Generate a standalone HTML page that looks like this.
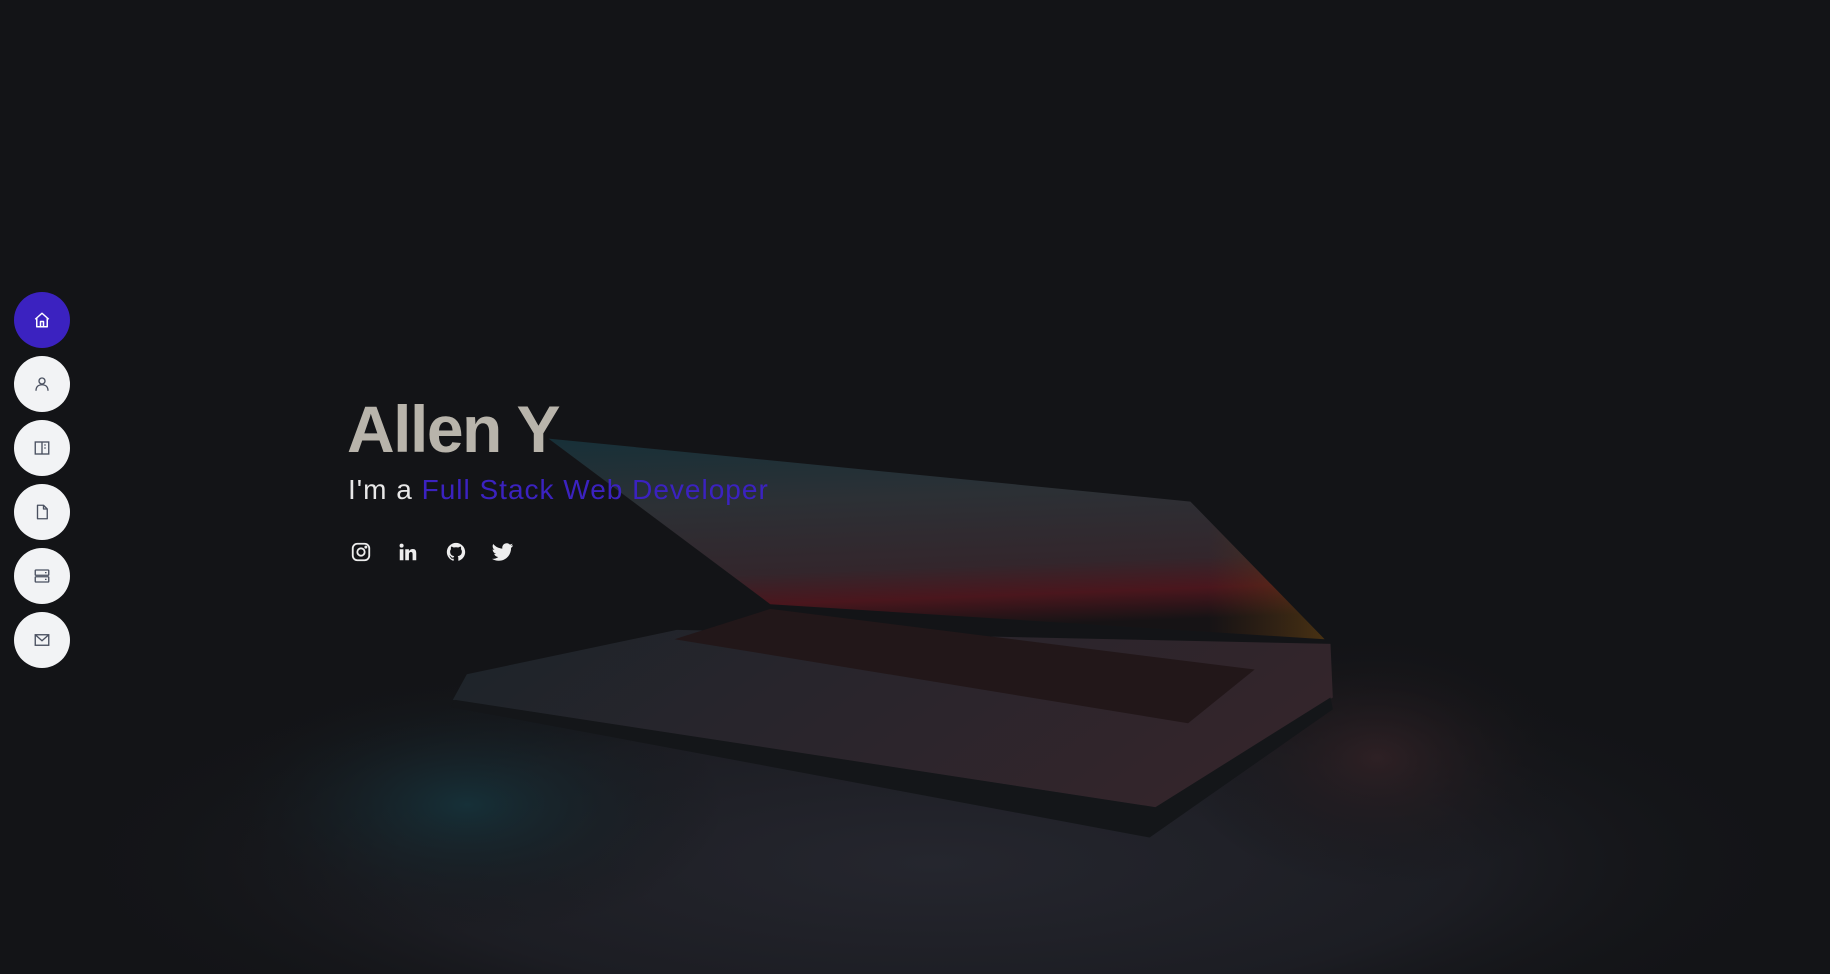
<!DOCTYPE html>
<html><head><meta charset="utf-8"><style>
html,body{margin:0;padding:0;width:1830px;height:974px;overflow:hidden;background:#131417;font-family:"Liberation Sans",sans-serif;position:relative}
.bg{position:absolute;left:0;top:0;width:1830px;height:974px;display:block}
.nav{position:absolute;left:14px;width:56px;height:56px;border-radius:50%;background:#f2f3f5;display:flex;align-items:center;justify-content:center}
.nav.act{background:#3b22c0}
h1{position:absolute;left:347px;top:396px;margin:0;font-size:66px;font-weight:bold;color:#b8b4ab;letter-spacing:-1.5px;line-height:1}
.sub{position:absolute;left:348px;top:474px;font-size:28px;color:#e8e8e8;letter-spacing:1px;white-space:nowrap}
.sub span{color:#3b22c0}
.soc{position:absolute;top:541px;width:22px;height:22px}
</style></head><body>
<svg class="bg" viewBox="0 0 1568 835" preserveAspectRatio="none">
<defs>
<radialGradient id="floor" cx="0.5" cy="0.5" r="0.5"><stop offset="0" stop-color="#25262e"/><stop offset="0.6" stop-color="#1c1d23"/><stop offset="1" stop-color="#131417" stop-opacity="0"/></radialGradient>
<radialGradient id="teal" cx="0.5" cy="0.5" r="0.5"><stop offset="0" stop-color="#163038"/><stop offset="1" stop-color="#131417" stop-opacity="0"/></radialGradient>
<radialGradient id="red" cx="0.5" cy="0.5" r="0.5"><stop offset="0" stop-color="#2e2024"/><stop offset="1" stop-color="#131417" stop-opacity="0"/></radialGradient>
<linearGradient id="scr" x1="0" y1="0" x2="0.15" y2="1"><stop offset="0" stop-color="#173038"/><stop offset="0.35" stop-color="#2c3035"/><stop offset="0.7" stop-color="#33262c"/><stop offset="0.85" stop-color="#4a161d"/><stop offset="1" stop-color="#161315"/></linearGradient>
<linearGradient id="scr2" x1="0" y1="0" x2="1" y2="0"><stop offset="0" stop-color="#000" stop-opacity="0"/><stop offset="0.85" stop-color="#6a3a10" stop-opacity="0"/><stop offset="1" stop-color="#7a5010" stop-opacity="0.5"/></linearGradient>
<linearGradient id="base" x1="0" y1="0" x2="1" y2="0.3"><stop offset="0" stop-color="#1c2429"/><stop offset="0.4" stop-color="#27252c"/><stop offset="1" stop-color="#33252b"/></linearGradient>
</defs>
<ellipse cx="800" cy="740" rx="760" ry="200" fill="url(#floor)"/>
<ellipse cx="400" cy="690" rx="220" ry="110" fill="url(#teal)"/>
<ellipse cx="1180" cy="650" rx="170" ry="110" fill="url(#red)"/>
<polygon points="470,376 1020,430 1135,548 660,518" fill="url(#scr)"/>
<polygon points="470,376 1020,430 1135,548 660,518" fill="url(#scr2)"/>
<polygon points="400,578 580,540 1140,552 1142,598 990,692 388,600" fill="url(#base)"/>
<polygon points="390,600 990,692 1140,598 1142,608 985,718 386,606" fill="#141619"/>
<polygon points="578,548 660,522 1075,574 1018,620" fill="#221719"/>
</svg>

<div class="nav act" style="top:292px"><svg width="18" height="18" viewBox="0 0 24 24" fill="none" stroke="#fff" stroke-width="2" stroke-linejoin="round"><path d="M3 11 L12 3 L21 11 M5 9 V21 H19 V9 M10 21 V14 H14 V21"/></svg></div>
<div class="nav" style="top:356px"><svg width="18" height="18" viewBox="0 0 24 24" fill="none" stroke="#4a5060" stroke-width="1.8"><circle cx="12" cy="8" r="4"/><path d="M4 21 C4 15 8 13 12 13 C16 13 20 15 20 21"/></svg></div>
<div class="nav" style="top:420px"><svg width="18" height="18" viewBox="0 0 24 24" fill="none" stroke="#4a5060" stroke-width="1.8"><rect x="3" y="4" width="18" height="16"/><path d="M12 4 V20 M15 8 H17 M15 12 H17"/></svg></div>
<div class="nav" style="top:484px"><svg width="18" height="18" viewBox="0 0 24 24" fill="none" stroke="#4a5060" stroke-width="1.8" stroke-linejoin="round"><path d="M6 3 H14 L19 8 V21 H6 Z M14 3 V8 H19"/></svg></div>
<div class="nav" style="top:548px"><svg width="18" height="18" viewBox="0 0 24 24" fill="none" stroke="#4a5060" stroke-width="1.8"><rect x="3" y="4" width="18" height="7" rx="1"/><rect x="3" y="13" width="18" height="7" rx="1"/><path d="M16 7.5 H18 M16 16.5 H18"/></svg></div>
<div class="nav" style="top:612px"><svg width="18" height="18" viewBox="0 0 24 24" fill="none" stroke="#4a5060" stroke-width="1.8"><rect x="3" y="5" width="18" height="14"/><path d="M3 5 L12 13 L21 5"/></svg></div>

<h1>Allen Y</h1>
<div class="sub">I'm a <span>Full Stack Web Developer</span></div>

<svg class="soc" style="left:350px" viewBox="0 0 24 24" fill="none" stroke="#eee" stroke-width="2"><rect x="3" y="3" width="18" height="18" rx="5"/><circle cx="12" cy="12" r="4"/><circle cx="17.3" cy="6.7" r="0.6" fill="#eee"/></svg>
<svg class="soc" style="left:397px" viewBox="0 0 24 24" fill="#eee"><rect x="3" y="9" width="4" height="12"/><circle cx="5" cy="5" r="2.2"/><path d="M9 9 H13 V11 C14 9.5 15.5 8.7 17.3 8.7 C20 8.7 21 10.5 21 13.5 V21 H17 V14.3 C17 12.8 16.5 12 15.2 12 C13.8 12 13 13 13 14.5 V21 H9 Z"/></svg>
<svg class="soc" style="left:445px" viewBox="0 0 24 24" fill="#eee"><path d="M12 2 C6.5 2 2 6.5 2 12 C2 16.4 4.9 20.2 8.8 21.5 C9.3 21.6 9.5 21.3 9.5 21 V19.3 C6.7 19.9 6.1 18 6.1 18 C5.6 16.8 5 16.5 5 16.5 C4.1 15.9 5.1 15.900 5.1 15.9 C6.1 16 6.6 17 6.6 17 C7.5 18.5 9 18.1 9.5 17.8 C9.6 17.2 9.9 16.7 10.2 16.5 C8 16.2 5.6 15.4 5.6 11.5 C5.6 10.4 6 9.5 6.6 8.8 C6.5 8.5 6.2 7.5 6.700 6.1 C6.7 6.1 7.5 5.8 9.5 7.1 C10.3 6.9 11.1 6.8 12 6.8 C12.9 6.8 13.7 6.9 14.5 7.1 C16.5 5.8 17.3 6.1 17.3 6.1 C17.8 7.5 17.5 8.5 17.4 8.8 C18 9.5 18.4 10.4 18.4 11.5 C18.4 15.4 16 16.2 13.8 16.5 C14.2 16.8 14.5 17.4 14.5 18.3 V21 C14.5 21.3 14.7 21.6 15.2 21.5 C19.1 20.2 22 16.4 22 12 C22 6.5 17.5 2 12 2 Z"/></svg>
<svg class="soc" style="left:492px" viewBox="0 0 24 24" fill="#eee"><path d="M23 4.6 C22.2 5 21.3 5.2 20.4 5.3 C21.4 4.7 22.1 3.8 22.4 2.8 C21.5 3.3 20.5 3.7 19.5 3.9 C18.6 3 17.4 2.4 16 2.4 C13.3 2.4 11.2 4.6 11.2 7.2 C11.2 7.6 11.2 7.9 11.3 8.3 C7.3 8.1 3.7 6.2 1.4 3.3 C1 4 0.7 4.8 0.7 5.7 C0.7 7.4 1.6 8.9 2.9 9.7 C2.1 9.7 1.4 9.5 0.7 9.1 C0.7 11.5 2.4 13.4 4.6 13.9 C4.2 14 3.8 14.1 3.3 14.1 C3 14.1 2.7 14.1 2.4 14 C3 15.9 4.8 17.3 6.9 17.4 C5.3 18.7 3.2 19.5 0.9 19.5 C0.5 19.5 0.1 19.5 -0.2 19.4 C2 20.8 4.5 21.6 7.3 21.6 C16 21.600 20.8 14.4 20.8 8.1 V7.5 C21.7 6.8 22.5 6 23 4.6 Z"/></svg>
</body></html>
